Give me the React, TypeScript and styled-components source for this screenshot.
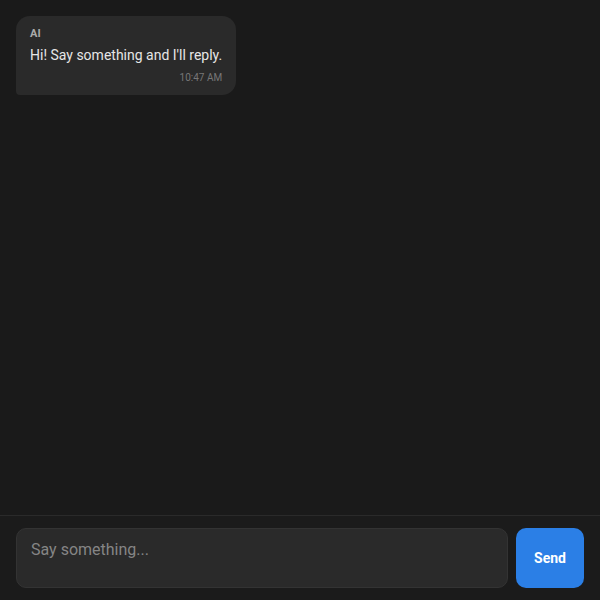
import { FC } from "react";
import styled, { createGlobalStyle } from "styled-components";

const GlobalStyle = createGlobalStyle`
  html, body, #root {
    margin: 0;
    height: 100%;
  }
  body {
    background: #1a1a1a;
    font-family: Roboto, "Liberation Sans", sans-serif;
  }
`;

const Page = styled.div`
  display: flex;
  flex-direction: column;
  height: 100vh;
  box-sizing: border-box;
`;

const Messages = styled.div`
  flex: 1;
  display: flex;
  flex-direction: column;
  align-items: flex-start;
  padding: 16px;
  overflow-y: auto;
`;

const Bubble = styled.div`
  background: #2a2a2a;
  border-radius: 14px 14px 14px 4px;
  padding: 11px 14px 11px;
  color: #e6e6e6;
`;

const Sender = styled.div`
  font-size: 11px;
  line-height: 14px;
  font-weight: 700;
  color: #aaaaaa;
  margin-bottom: 4px;
`;

const Text = styled.div`
  font-size: 14px;
  line-height: 20px;
`;

const Time = styled.div`
  font-size: 10px;
  line-height: 13px;
  color: #777;
  text-align: right;
  margin-top: 6px;
`;

const Footer = styled.form`
  display: flex;
  gap: 8px;
  padding: 12px 16px;
  border-top: 1px solid #2a2a2a;
  background: #1b1b1b;
`;

const Input = styled.textarea`
  flex: 1;
  height: 60px;
  box-sizing: border-box;
  resize: none;
  background: #2a2a2a;
  border: 1px solid #333;
  border-radius: 10px;
  padding: 11px 14px;
  font-family: inherit;
  font-size: 16px;
  color: #e6e6e6;
  outline: none;

  &::placeholder {
    color: #858585;
  }
`;

const SendButton = styled.button`
  width: 68px;
  height: 60px;
  border: none;
  border-radius: 10px;
  background: #2b7fe6;
  color: #fff;
  font-family: inherit;
  font-size: 14px;
  font-weight: 700;
  cursor: pointer;
`;

const App: FC = () => {
  return (
    <Page>
      <GlobalStyle />
      <Messages>
        <Bubble>
          <Sender>AI</Sender>
          <Text>Hi! Say something and I'll reply.</Text>
          <Time>10:47 AM</Time>
        </Bubble>
      </Messages>
      <Footer onSubmit={(e) => e.preventDefault()}>
        <Input placeholder="Say something..." />
        <SendButton type="submit">Send</SendButton>
      </Footer>
    </Page>
  );
};

export default App;
